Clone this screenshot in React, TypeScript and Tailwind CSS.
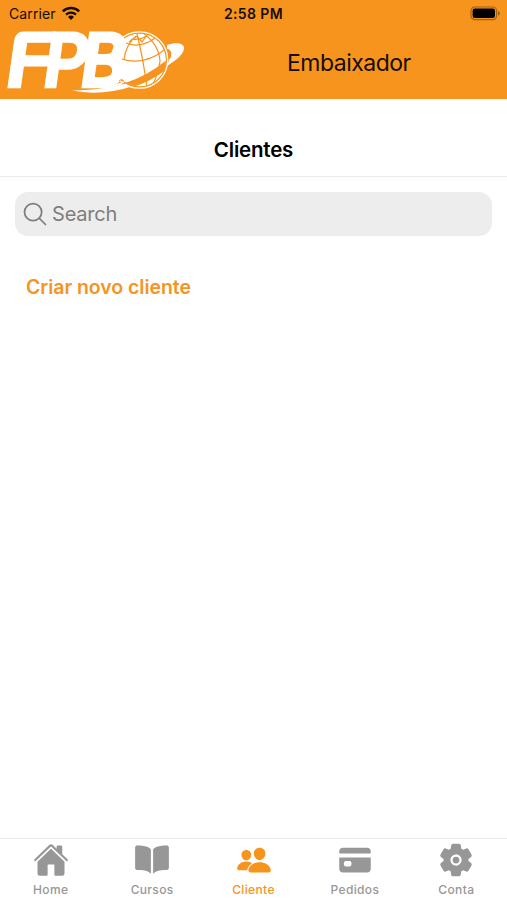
import type { ReactNode } from "react";
import { IoHome, IoBook, IoPeople, IoCard, IoSettings, IoSearchOutline } from "react-icons/io5";

function Wifi() {
  return (
    <svg width="20" height="15" viewBox="0 0 20 15" fill="none" stroke="#160c02">
      <path d="M1.8 5.3a11.8 11.8 0 0 1 16.4 0" strokeWidth="2.4" />
      <path d="M5 8.6a7.2 7.2 0 0 1 10 0" strokeWidth="2.2" />
      <path d="M10 14 7 11a4.3 4.3 0 0 1 6 0Z" fill="#160c02" stroke="none" />
    </svg>
  );
}

function Battery() {
  return (
    <svg width="31" height="15" viewBox="0 0 31 15">
      <rect x="1" y="1" width="25.6" height="12.6" rx="3.8" fill="none" stroke="#a2600f" strokeWidth="1.2" />
      <rect x="2.6" y="2.6" width="22.4" height="9.4" rx="2.2" fill="#000" />
      <path d="M28 5v4.6c1.2-.4 1.9-1.3 1.9-2.3S29.2 5.4 28 5Z" fill="#a2600f" />
    </svg>
  );
}

function Logo() {
  return (
    <svg width="188" height="92" viewBox="0 14 188 92" className="-mt-[15px] -ml-[6px] shrink-0" role="img" aria-label="FPB">
      <defs>
        <clipPath id="letters">
          <path d="M0 94 L6 94 L13.5 43 Q15 31 25 31 H132 V94 Z" />
        </clipPath>
        <clipPath id="globe">
          <circle cx="139.5" cy="60" r="26.5" />
        </clipPath>
      </defs>
      <circle cx="139.5" cy="60" r="28.2" fill="none" stroke="#fff" strokeWidth="1.3" />
      <g clipPath="url(#globe)">
        <circle cx="139.5" cy="60" r="26.5" fill="#fff" />
        <g fill="none" stroke="#f7941e" strokeWidth="1.2">
          <path d="M126 43c9 4 20 2 29-5M122 59c14 5 32 1 44-11" />
          <path d="M137 34c3 12 7 30 10 54M143 33c10 7 16 15 17 28-1 9-4 17-7 23M136 36c-7 6-11 14-12 24M131 39c5 1 11 0 16-3M129 42l8-6 5 6 5-7" />
        </g>
        <path d="M125 83Q148 76 169 58L167 69Q152 81 133 87Z" fill="#f7941e" />
      </g>
      <g clipPath="url(#letters)">
        <g fill="#fff" stroke="#fff" strokeWidth="4.4" strokeLinejoin="miter" fontFamily="Inter, 'Liberation Sans', sans-serif" fontWeight="500" fontSize="72">
          <text transform="translate(3.7 86) skewX(-8)" textLength="46" lengthAdjust="spacingAndGlyphs">F</text>
          <text transform="translate(41.2 86) skewX(-8)" textLength="44" lengthAdjust="spacingAndGlyphs">P</text>
          <text transform="translate(78.3 86) skewX(-8)" textLength="45" lengthAdjust="spacingAndGlyphs">B</text>
        </g>
      </g>
      <path d="M167 45c9-3 18-2 17 4-1 6-9 12-17 17l2-6c2-3 3-5 2-8-1-2-2-3-4-3Z" fill="#fff" />
      <path d="M72 90c20 1 37-2 52-9-1 3 3 5 9 5-21 7-43 9-61 4Z" fill="#fff" />
      <path d="M119 81c2-2 4-1 5 0m-2 3 4-1" fill="none" stroke="#f7941e" strokeWidth="1" />
    </svg>
  );
}

function Tab({ label, active, children }: { label: string; active?: boolean; children: ReactNode }) {
  return (
    <button className={`flex flex-1 flex-col items-center pt-[3px] ${active ? "text-[#f7941e]" : "text-[#979797]"}`}>
      <span className="flex h-9 items-center text-[36px]">{children}</span>
      <span className="mt-[4px] text-[12px] leading-4 font-medium tracking-[0.35px]">{label}</span>
    </button>
  );
}

export default function App() {
  return (
    <div className="flex h-[900px] w-[507px] flex-col overflow-hidden bg-white font-['Inter','Liberation_Sans',sans-serif] text-black">
      <header className="h-[98.5px] shrink-0 bg-[#f7941e]">
        <div className="grid h-[26px] grid-cols-3 items-center pr-[6px] pl-[9px] text-[#160c02]">
          <div className="flex items-center gap-[5px] text-[14px] tracking-[0.1px]">
            <span>Carrier</span>
            <Wifi />
          </div>
          <span className="-ml-[3px] text-center text-[14px] font-semibold tracking-[0.4px]">2:58 PM</span>
          <div className="flex justify-end">
            <Battery />
          </div>
        </div>
        <div className="flex h-[72px] items-start pt-[3px] pl-[6px]">
          <Logo />
          <h1 className="ml-[99px] pt-[18px] text-[23px] leading-8 font-normal tracking-[-0.5px] text-[#160c02]">Embaixador</h1>
        </div>
      </header>
      <div className="flex h-[78.5px] shrink-0 items-end justify-center border-b border-[#ebebeb] pb-[10px]">
        <h2 className="text-[20.5px] leading-8 font-semibold tracking-[-0.2px]">Clientes</h2>
      </div>
      <main className="flex-1 px-[15px] pt-[15px]">
        <label className="flex h-[44px] items-center rounded-[13px] bg-[#ededed] pl-[6px] text-[#7e7e7e]">
          <IoSearchOutline className="size-[28px]" />
          <span className="ml-[3px] text-[20px] tracking-[-0.2px]">Search</span>
        </label>
        <button className="mt-[35px] ml-[11px] text-[19.5px] leading-8 font-semibold tracking-[-0.05px] text-[#f7941e]">Criar novo cliente</button>
      </main>
      <nav className="flex h-[62px] shrink-0 border-t border-[#ebebeb]">
        <Tab label="Home"><IoHome /></Tab>
        <Tab label="Cursos"><IoBook /></Tab>
        <Tab label="Cliente" active><IoPeople /></Tab>
        <Tab label="Pedidos"><IoCard /></Tab>
        <Tab label="Conta"><IoSettings /></Tab>
      </nav>
    </div>
  );
}
